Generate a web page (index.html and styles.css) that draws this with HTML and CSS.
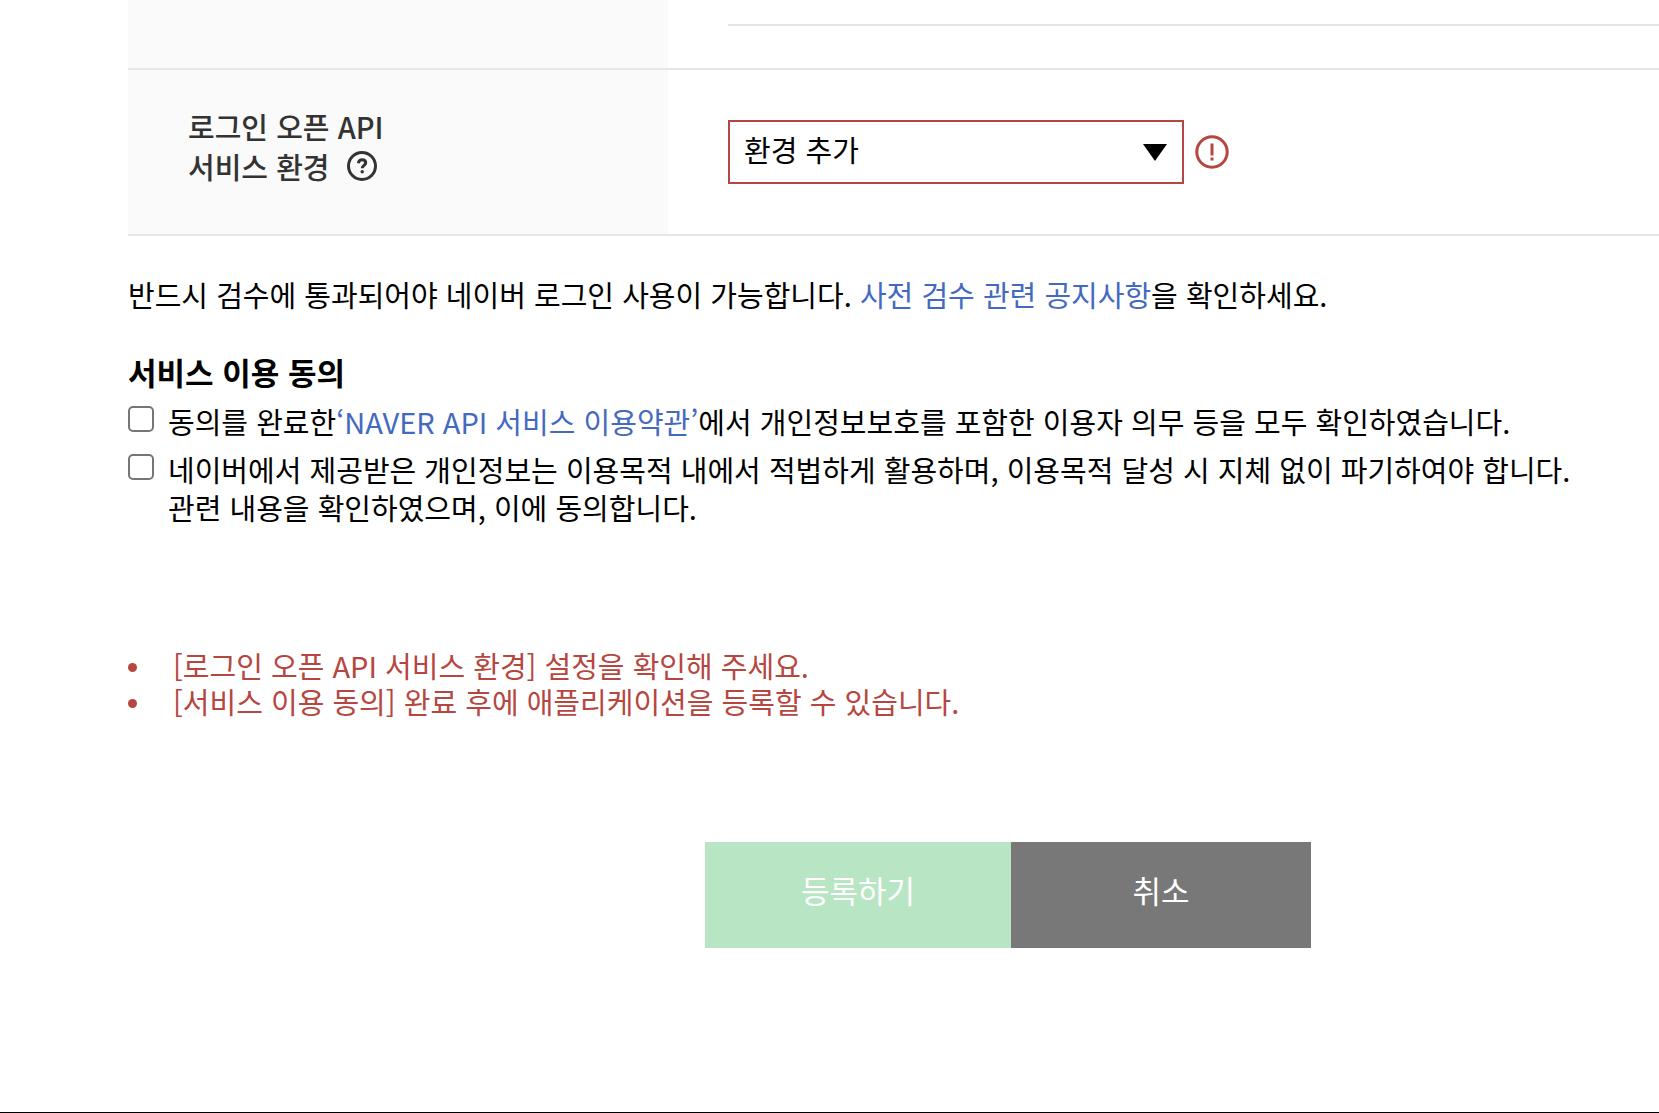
FILE: index.html
```html
<!DOCTYPE html>
<html lang="ko">
<head>
    <meta charset="UTF-8">
    <meta name="viewport" content="width=device-width, initial-scale=1.0">
    <title>애플리케이션 등록</title>
    <link rel="stylesheet" href="styles.css">
</head>
<body>
    <form class="container">
        <table class="form-table">
            <tr class="row-prev">
                <th></th>
                <td><div class="divider"></div></td>
            </tr>
            <tr class="row-env">
                <th scope="row">
                    <label for="env">로그인 오픈 API<br>서비스 환경</label>
                    <button type="button" class="help" aria-label="도움말">
                        <svg width="32" height="32" viewBox="0 0 32 32" fill="none" stroke="#333" stroke-width="3">
                            <circle cx="16" cy="16" r="13.5"/>
                            <path d="M12.4 13.2c.3-2.3 1.700-3.500 3.700-3.500 2.200 0 3.600 1.200 3.600 3.100 0 2.500-3.500 2.600-3.500 5.400"/>
                            <circle cx="16.200" cy="21.800" r="1.700" fill="#333" stroke="none"/>
                        </svg>
                    </button>
                </th>
                <td>
                    <div class="field">
                        <div class="select-box">
                            <select id="env">
                                <option>환경 추가</option>
                            </select>
                            <svg class="arrow" width="24" height="17" viewBox="0 0 24 17">
                                <path d="M0 0h24L12 17z"/>
                            </svg>
                        </div>
                        <svg class="alert" width="34" height="34" viewBox="0 0 34 34" fill="none" stroke="#b64640" stroke-width="3">
                            <circle cx="17" cy="17" r="15.2"/>
                            <path d="M17 8.500v12M17 22.500v3"/>
                        </svg>
                    </div>
                </td>
            </tr>
        </table>

        <p class="notice">반드시 검수에 통과되어야 네이버 로그인 사용이 가능합니다. <a href="#">사전 검수 관련 공지사항</a>을 확인하세요.</p>

        <h2 class="heading">서비스 이용 동의</h2>
        <div class="agree">
            <input type="checkbox" id="agree1">
            <label for="agree1">동의를 완료한<a href="#">‘NAVER API 서비스 이용약관’</a>에서 개인정보보호를 포함한 이용자 의무 등을 모두 확인하였습니다.</label>
        </div>
        <div class="agree">
            <input type="checkbox" id="agree2">
            <label for="agree2">네이버에서 제공받은 개인정보는 이용목적 내에서 적법하게 활용하며, 이용목적 달성 시 지체 없이 파기하여야 합니다.<br>관련 내용을 확인하였으며, 이에 동의합니다.</label>
        </div>

        <ul class="errors">
            <li>[로그인 오픈 API 서비스 환경] 설정을 확인해 주세요.</li>
            <li>[서비스 이용 동의] 완료 후에 애플리케이션을 등록할 수 있습니다.</li>
        </ul>

        <div class="buttons">
            <button type="submit" class="btn-submit" disabled>등록하기</button>
            <button type="button" class="btn-cancel">취소</button>
        </div>
    </form>
    <footer class="footer"></footer>
</body>
</html>
```
FILE: styles.css
```css
* {
    box-sizing: border-box;
}

body {
    margin: 0;
    background: #fff;
    color: #000;
    font-family: 'Noto Sans CJK KR', sans-serif;
    font-size: 29px;
    line-height: 38px;
}

a {
    color: #4469c0;
    text-decoration: none;
}

.container {
    margin: 0 0 0 128px;
}

.form-table {
    width: 100%;
    border-collapse: separate;
    border-spacing: 0;
}

.form-table th,
.form-table td {
    padding: 0;
    border-bottom: 2px solid #e6e6e6;
    text-align: left;
}

.form-table th {
    width: 540px;
    padding-left: 60px;
    background: #fafafa;
    color: #333;
    font-weight: 500;
    line-height: 40px;
}

.form-table td {
    padding-left: 60px;
}

.divider {
    height: 26px;
    margin-bottom: 42px;
    border-bottom: 2px solid #e6e6e6;
}

.row-env th {
    padding-top: 36px;
    padding-bottom: 48px;
}

.help {
    height: 40px;
    margin: 0 0 0 8px;
    padding: 0;
    border: none;
    background: none;
    vertical-align: bottom;
    cursor: pointer;
}

.help svg {
    display: block;
}

.field {
    display: flex;
    align-items: center;
    gap: 11px;
}

.select-box {
    position: relative;
    width: 456px;
}

.select-box select {
    display: block;
    width: 100%;
    height: 64px;
    padding: 0 14px 6px;
    border: 2px solid #b64640;
    border-radius: 0;
    background: #fff;
    color: #000;
    font: inherit;
    appearance: none;
}

.arrow {
    position: absolute;
    top: 24px;
    right: 17px;
    pointer-events: none;
}

.notice {
    margin: 39px 0;
}

.heading {
    margin: 0 0 10px;
    font-size: 31px;
    font-weight: bold;
    line-height: 40px;
}

.agree {
    display: flex;
    align-items: flex-start;
    gap: 14px;
    margin-bottom: 10px;
}

.agree input {
    flex: none;
    width: 26px;
    height: 26px;
    margin: 4px 0 0;
    border: 2px solid #767676;
    border-radius: 5px;
    background: #fff;
    appearance: none;
}

.agree input:checked {
    background: #767676;
}

.errors {
    margin: 121px 0 123px;
    padding: 0;
    list-style: none;
    color: #b64640;
    line-height: 36px;
}

.errors li {
    display: flex;
    align-items: center;
    gap: 36px;
}

.errors li::before {
    content: '';
    width: 9px;
    height: 9px;
    margin-top: 4px;
    border-radius: 50%;
    background: #b64640;
}

.buttons {
    display: flex;
    justify-content: center;
    padding-left: 229px;
}

.buttons button {
    width: 300px;
    height: 106px;
    padding: 0 0 10px;
    border: none;
    color: #fff;
    font: inherit;
    font-size: 31px;
}

.buttons .btn-submit {
    width: 306px;
    background: #b8e6c4;
}

.buttons .btn-cancel {
    background: #787878;
    cursor: pointer;
}

.footer {
    margin-top: 164px;
    border-top: 1px solid #000;
}
```
